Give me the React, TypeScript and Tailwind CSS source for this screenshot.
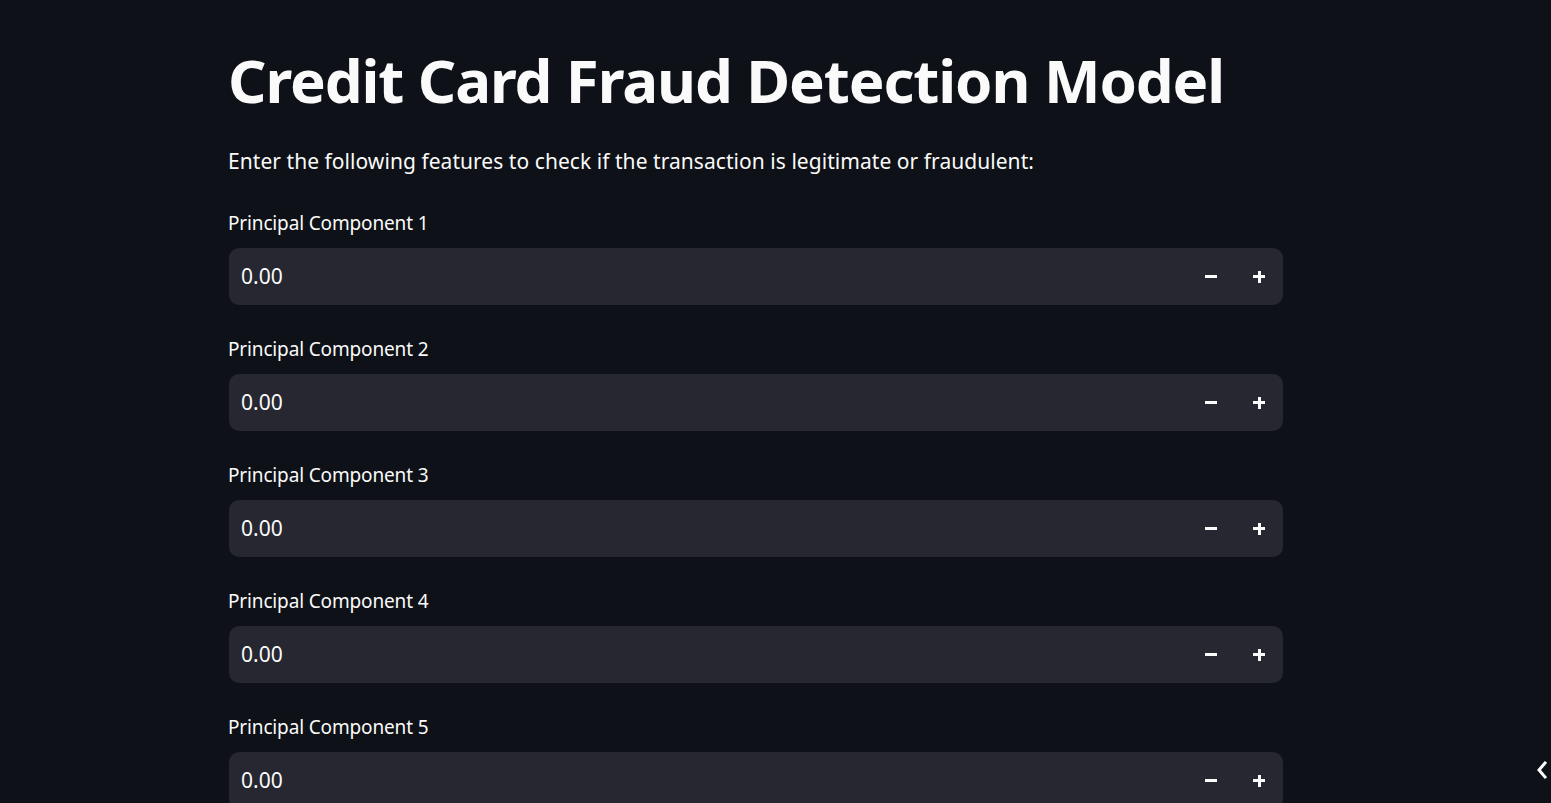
import React from "react";

const FONT = { fontFamily: '"Noto Sans", "Open Sans", sans-serif' };

function NumberField({ label }: { label: string }) {
  return (
    <div className="flex flex-col">
      <div className="h-[32px] flex items-center text-[19px] tracking-[-0.15px] text-[#fafafa]">{label}</div>
      <div className="mt-[9px] flex h-[57px] ml-px rounded-[10px] bg-[#262730] overflow-hidden">
        <div className="flex-1 flex items-center pl-[12px] text-[21px] text-[#fafafa]">0.00</div>
        <div className="w-[48px] flex items-center justify-center">
          <div className="w-[12px] h-[3px] bg-[#fafafa]" />
        </div>
        <div className="w-[48px] flex items-center justify-center">
          <div className="relative w-[12px] h-[12px]">
            <div className="absolute left-0 top-[4.5px] w-[12px] h-[3px] bg-[#fafafa]" />
            <div className="absolute top-0 left-[4.5px] w-[3px] h-[12px] bg-[#fafafa]" />
          </div>
        </div>
      </div>
    </div>
  );
}

export default function App() {
  return (
    <div className="relative w-full h-[803px] overflow-hidden bg-[#0e1117] text-[#fafafa]" style={FONT}>
      <div className="w-[1055px] ml-[228px] flex flex-col">
        <h1 className="mt-[40px] h-[80px] flex items-center text-[60px] font-bold leading-none tracking-[-1.1px]">
          Credit Card Fraud Detection Model
        </h1>
        <p className="mt-[25px] text-[21px] tracking-[0.05px] leading-[32px]">
          Enter the following features to check if the transaction is legitimate or fraudulent:
        </p>
        <div className="mt-[30px] flex flex-col gap-[28px]">
          {[1, 2, 3, 4, 5].map((n) => (
            <NumberField key={n} label={`Principal Component ${n}`} />
          ))}
        </div>
      </div>
      <div className="absolute right-[2px] bottom-[23px] text-white">
        <svg width="14" height="20" viewBox="0 0 14 20" fill="none" stroke="currentColor" strokeWidth="3" strokeLinecap="square">
          <path d="M10 3 L4 10 L10 17" />
        </svg>
      </div>
    </div>
  );
}
